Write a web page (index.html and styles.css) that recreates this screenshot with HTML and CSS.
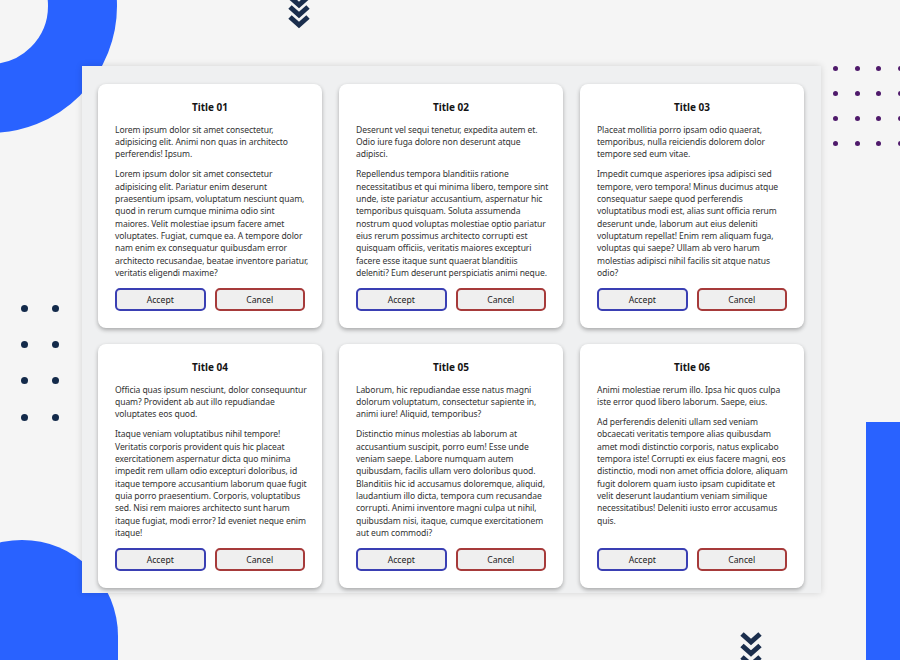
FILE: index.html
```html
<!DOCTYPE html>
<html lang="en">
<head>
<meta charset="utf-8">
<title>Cards</title>
<link rel="stylesheet" href="styles.css">
</head>
<body>
<div class="deco ring"></div>
<div class="deco blob"></div>
<div class="deco bar"></div>
<svg class="deco chev chev-top" width="22" height="40" viewBox="0 0 22 40"><polyline points="2,5 11,13 20,5"/><polyline points="2,15 11,23 20,15"/><polyline points="2,25 11,33 20,25"/></svg>
<svg class="deco chev chev-bottom" width="22" height="30" viewBox="0 0 22 30"><polyline points="2,4 11,12 20,4"/><polyline points="2,15.5 11,23.5 20,15.5"/><polyline points="2,27 11,35 20,27"/></svg>
<div class="deco dots dots-purple">
  <i></i><i></i><i></i><i></i>
  <i></i><i></i><i></i><i></i>
  <i></i><i></i><i></i><i></i>
  <i></i><i></i><i></i><i></i>
</div>
<div class="deco dots dots-navy">
  <i></i><i></i>
  <i></i><i></i>
  <i></i><i></i>
  <i></i><i></i>
</div>

<main class="panel">
  <section class="card">
    <h2 class="card-title">Title 01</h2>
    <p>Lorem ipsum dolor sit amet consectetur,<br>adipisicing elit. Animi non quas in architecto<br>perferendis! Ipsum.</p>
    <p>Lorem ipsum dolor sit amet consectetur<br>adipisicing elit. Pariatur enim deserunt<br>praesentium ipsam, voluptatum nesciunt quam,<br>quod in rerum cumque minima odio sint<br>maiores. Velit molestiae ipsum facere amet<br>voluptates. Fugiat, cumque ea. A tempore dolor<br>nam enim ex consequatur quibusdam error<br>architecto recusandae, beatae inventore pariatur,<br>veritatis eligendi maxime?</p>
    <div class="actions"><button class="btn accept">Accept</button><button class="btn cancel">Cancel</button></div>
  </section>
  <section class="card">
    <h2 class="card-title">Title 02</h2>
    <p>Deserunt vel sequi tenetur, expedita autem et.<br>Odio iure fuga dolore non deserunt atque<br>adipisci.</p>
    <p>Repellendus tempora blanditiis ratione<br>necessitatibus et qui minima libero, tempore sint<br>unde, iste pariatur accusantium, aspernatur hic<br>temporibus quisquam. Soluta assumenda<br>nostrum quod voluptas molestiae optio pariatur<br>eius rerum possimus architecto corrupti est<br>quisquam officiis, veritatis maiores excepturi<br>facere esse itaque sunt quaerat blanditiis<br>deleniti? Eum deserunt perspiciatis animi neque.</p>
    <div class="actions"><button class="btn accept">Accept</button><button class="btn cancel">Cancel</button></div>
  </section>
  <section class="card">
    <h2 class="card-title">Title 03</h2>
    <p>Placeat mollitia porro ipsam odio quaerat,<br>temporibus, nulla reiciendis dolorem dolor<br>tempore sed eum vitae.</p>
    <p>Impedit cumque asperiores ipsa adipisci sed<br>tempore, vero tempora! Minus ducimus atque<br>consequatur saepe quod perferendis<br>voluptatibus modi est, alias sunt officia rerum<br>deserunt unde, laborum aut eius deleniti<br>voluptatum repellat! Enim rem aliquam fuga,<br>voluptas qui saepe? Ullam ab vero harum<br>molestias adipisci nihil facilis sit atque natus<br>odio?</p>
    <div class="actions"><button class="btn accept">Accept</button><button class="btn cancel">Cancel</button></div>
  </section>
  <section class="card">
    <h2 class="card-title">Title 04</h2>
    <p>Officia quas ipsum nesciunt, dolor consequuntur<br>quam? Provident ab aut illo repudiandae<br>voluptates eos quod.</p>
    <p>Itaque veniam voluptatibus nihil tempore!<br>Veritatis corporis provident quis hic placeat<br>exercitationem aspernatur dicta quo minima<br>impedit rem ullam odio excepturi doloribus, id<br>itaque tempore accusantium laborum quae fugit<br>quia porro praesentium. Corporis, voluptatibus<br>sed. Nisi rem maiores architecto sunt harum<br>itaque fugiat, modi error? Id eveniet neque enim<br>itaque!</p>
    <div class="actions"><button class="btn accept">Accept</button><button class="btn cancel">Cancel</button></div>
  </section>
  <section class="card">
    <h2 class="card-title">Title 05</h2>
    <p>Laborum, hic repudiandae esse natus magni<br>dolorum voluptatum, consectetur sapiente in,<br>animi iure! Aliquid, temporibus?</p>
    <p>Distinctio minus molestias ab laborum at<br>accusantium suscipit, porro eum! Esse unde<br>veniam saepe. Labore numquam autem<br>quibusdam, facilis ullam vero doloribus quod.<br>Blanditiis hic id accusamus doloremque, aliquid,<br>laudantium illo dicta, tempora cum recusandae<br>corrupti. Animi inventore magni culpa ut nihil,<br>quibusdam nisi, itaque, cumque exercitationem<br>aut eum commodi?</p>
    <div class="actions"><button class="btn accept">Accept</button><button class="btn cancel">Cancel</button></div>
  </section>
  <section class="card">
    <h2 class="card-title">Title 06</h2>
    <p>Animi molestiae rerum illo. Ipsa hic quos culpa<br>iste error quod libero laborum. Saepe, eius.</p>
    <p>Ad perferendis deleniti ullam sed veniam<br>obcaecati veritatis tempore alias quibusdam<br>amet modi distinctio corporis, natus explicabo<br>tempora iste! Corrupti ex eius facere magni, eos<br>distinctio, modi non amet officia dolore, aliquam<br>fugit dolorem quam iusto ipsam cupiditate et<br>velit deserunt laudantium veniam similique<br>necessitatibus! Deleniti iusto error accusamus<br>quis.</p>
    <div class="actions"><button class="btn accept">Accept</button><button class="btn cancel">Cancel</button></div>
  </section>
</main>
</body>
</html>
```
FILE: styles.css
```css
html, body {
  margin: 0;
  padding: 0;
}
body {
  width: 900px;
  height: 660px;
  overflow: hidden;
  position: relative;
  background: #f5f5f5;
  font-family: "Noto Sans", "Open Sans", sans-serif;
}

.deco {
  position: absolute;
  z-index: 0;
}
.ring {
  left: -137px;
  top: -121px;
  width: 254px;
  height: 254px;
  box-sizing: border-box;
  border: 69px solid #2962ff;
  border-radius: 50%;
}
.blob {
  left: -74px;
  top: 540px;
  width: 192px;
  height: 120px;
  border-radius: 96px 96px 0 0 / 96px 96px 0 0;
  background: #2962ff;
}
.bar {
  left: 866px;
  top: 422px;
  width: 34px;
  height: 238px;
  background: #2962ff;
}
.chev polyline {
  fill: none;
  stroke: #1b2e4d;
  stroke-width: 5;
  stroke-linejoin: miter;
}
.chev-top {
  left: 288px;
  top: -8px;
}
.chev-bottom {
  left: 740px;
  top: 630px;
}
.dots {
  display: grid;
}
.dots i {
  display: block;
  border-radius: 50%;
}
.dots-purple {
  left: 833px;
  top: 66px;
  grid-template-columns: repeat(4, 5px);
  column-gap: 16.6px;
  row-gap: 20px;
}
.dots-purple i {
  width: 5px;
  height: 5px;
  background: #4f1a6b;
}
.dots-navy {
  left: 21px;
  top: 305px;
  grid-template-columns: repeat(2, 7px);
  column-gap: 24px;
  row-gap: 29.2px;
}
.dots-navy i {
  width: 7px;
  height: 7px;
  background: #132a4a;
}

.panel {
  position: relative;
  z-index: 1;
  box-sizing: border-box;
  width: 739px;
  height: 527px;
  margin: 66px 0 0 82px;
  padding: 18px 17px 5px 16px;
  background: #eff0f1;
  box-shadow: 0 0 7px rgba(0, 0, 0, 0.14);
  display: grid;
  grid-template-columns: repeat(3, 224px);
  grid-template-rows: 244px 244px;
  column-gap: 17px;
  row-gap: 16px;
}

.card {
  background: #fff;
  border-radius: 8px;
  box-shadow: 0 2px 4px rgba(0, 0, 0, 0.3);
  padding: 17px;
  display: flex;
  flex-direction: column;
  min-height: 0;
}
.card-title {
  margin: 0 0 9px;
  font-size: 10px;
  line-height: 13.6px;
  font-weight: 700;
  text-align: center;
  color: #141414;
}
.card p {
  margin: 0 0 8px;
  font-size: 8.55px;
  line-height: 12.3px;
  letter-spacing: -0.08px;
  color: #333;
  white-space: nowrap;
}
.actions {
  margin-top: auto;
  display: flex;
  gap: 9px;
}
.btn {
  flex: 1;
  height: 23px;
  box-sizing: border-box;
  border: 2px solid;
  border-radius: 5px;
  background: #efefef;
  font-family: "Noto Sans", "Open Sans", sans-serif;
  font-size: 8.66px;
  color: #222;
  padding: 0;
}
.accept {
  border-color: #3a3fb3;
}
.cancel {
  border-color: #a63a3a;
}
```
